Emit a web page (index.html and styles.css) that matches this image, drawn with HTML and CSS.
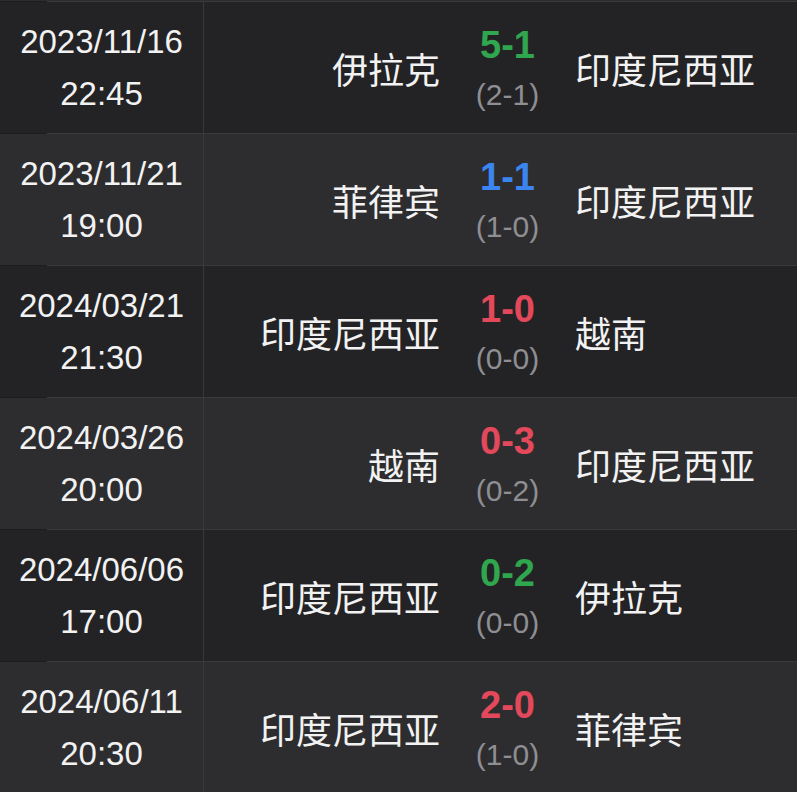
FILE: index.html
```html
<!DOCTYPE html>
<html lang="zh-CN">
  <head>
    <meta charset="UTF-8" />
    <meta name="viewport" content="width=device-width, initial-scale=1.0" />
    <title>赛程</title>
    <link rel="stylesheet" href="styles.css">
  </head>
  <body>
    <div class="matches">
      <div class="match">
        <div class="date">2023/11/16<br />22:45</div>
        <div class="team home">伊拉克</div>
        <div class="score"><span class="ft win">5-1</span><span class="ht">(2-1)</span></div>
        <div class="team away">印度尼西亚</div>
      </div>
      <div class="match">
        <div class="date">2023/11/21<br />19:00</div>
        <div class="team home">菲律宾</div>
        <div class="score"><span class="ft draw">1-1</span><span class="ht">(1-0)</span></div>
        <div class="team away">印度尼西亚</div>
      </div>
      <div class="match">
        <div class="date">2024/03/21<br />21:30</div>
        <div class="team home">印度尼西亚</div>
        <div class="score"><span class="ft loss">1-0</span><span class="ht">(0-0)</span></div>
        <div class="team away">越南</div>
      </div>
      <div class="match">
        <div class="date">2024/03/26<br />20:00</div>
        <div class="team home">越南</div>
        <div class="score"><span class="ft loss">0-3</span><span class="ht">(0-2)</span></div>
        <div class="team away">印度尼西亚</div>
      </div>
      <div class="match">
        <div class="date">2024/06/06<br />17:00</div>
        <div class="team home">印度尼西亚</div>
        <div class="score"><span class="ft win">0-2</span><span class="ht">(0-0)</span></div>
        <div class="team away">伊拉克</div>
      </div>
      <div class="match">
        <div class="date">2024/06/11<br />20:30</div>
        <div class="team home">印度尼西亚</div>
        <div class="score"><span class="ft loss">2-0</span><span class="ht">(1-0)</span></div>
        <div class="team away">菲律宾</div>
      </div>
    </div>
  </body>
</html>
```

FILE: styles.css
```css
body {
  margin: 0;
  background-color: #2d2d2f;
  color: #f2f2f2;
  font-family: "Liberation Sans", Arial, sans-serif;
}
.matches {
  margin-top: 1px;
}
.match {
  display: grid;
  grid-template-columns: 203px 237px 135px 1fr;
  height: 132px;
  background-color: #232325;
}
.match:nth-child(even) {
  background-color: #2d2d2f;
}
.match > div {
  border-top: 1px solid #3a3a3c;
  display: flex;
  align-items: center;
}
.date {
  border-image: linear-gradient(to right, #1d1d1f 48px, #3a3a3c 48px) 1;
  justify-content: center;
  text-align: center;
  font-size: 33px;
  line-height: 52px;
}
.team {
  font-family: "Noto Sans CJK SC", sans-serif;
  font-size: 36px;
}
.home {
  border-left: 1px solid #38383a;
  justify-content: flex-end;
}
.score {
  flex-direction: column;
  justify-content: center;
  padding-top: 5px;
  line-height: 49px;
}
.ft {
  font-weight: bold;
  font-size: 38px;
}
.ht {
  font-size: 30px;
  color: #8e8e93;
}
.win {
  color: #30a64e;
}
.draw {
  color: #3b85f0;
}
.loss {
  color: #e4495b;
}
```
